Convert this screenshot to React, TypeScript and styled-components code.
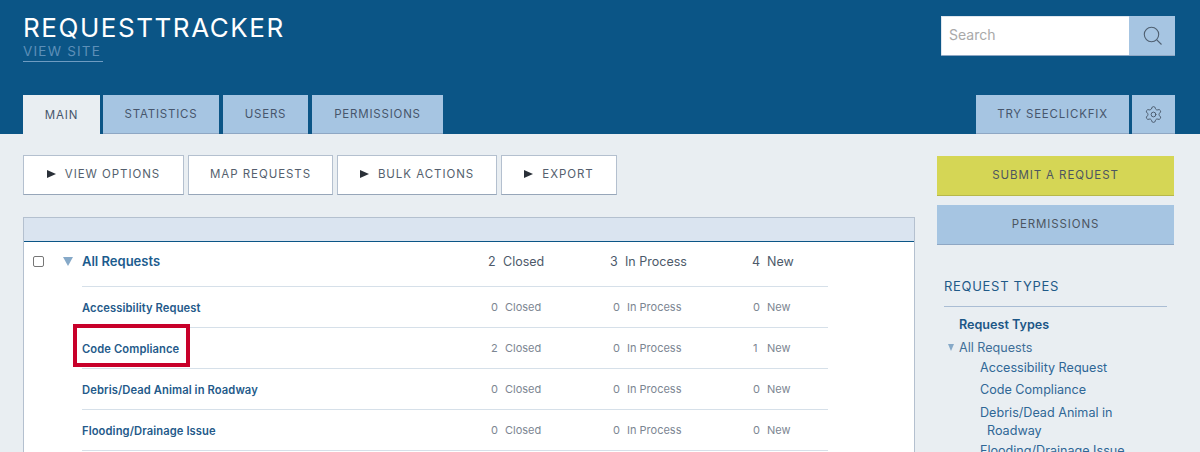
import React from "react";
import styled, { createGlobalStyle } from "styled-components";
import { Settings } from "lucide-react";

const Global = createGlobalStyle`
  html, body { margin: 0; padding: 0; background: #e9eef2; height: 452px; overflow: hidden; }
  body { font-family: "Inter", "Lato", sans-serif; color: #1f5a88; }
  * { box-sizing: border-box; }
`;

const Header = styled.header`
  height: 134px; background: #0b5586; padding: 16px 25px 0 23px;
  display: flex; flex-direction: column; justify-content: space-between;
`;
const TopRow = styled.div`display: flex; justify-content: space-between; align-items: flex-start;`;
const Brand = styled.div`display: flex; flex-direction: column; align-items: flex-start;`;
const Title = styled.h1`
  margin: 0; font-weight: 400; font-size: 26px; line-height: 24px; letter-spacing: 1.55px; color: #fff;
`;
const ViewSite = styled.a`
  font-size: 13.5px; line-height: 17px; letter-spacing: 1.2px; color: #5d8fb8;
  border-bottom: 1px solid #6f9cc2; padding-bottom: 1px; margin-top: 3px; padding-right: 2px;
`;
const Search = styled.div`display: flex; width: 234px; height: 39px; box-shadow: 0 1px 0 #8ea7c4;`;
const SearchInput = styled.div`
  flex: 1; background: #fff; color: #a9a9a9; font-size: 14px; padding: 0 7px; line-height: 36px;
  border-top: 1px solid #dfe6ee; border-left: 1px solid #dfe6ee;
`;
const SearchButton = styled.div`
  width: 46px; padding-left: 2px; background: #a6c5e2; display: flex; align-items: center; justify-content: center;
`;
const TabRow = styled.nav`display: flex; justify-content: space-between; align-items: flex-end;`;
const TabGroup = styled.div`display: flex;`;
const Tab = styled.div<{ $w: number; $gap?: number; $active?: boolean }>`
  width: ${p => p.$w}px; margin-right: ${p => p.$gap ?? 0}px; height: 39px;
  background: ${p => (p.$active ? "#e9eef2" : "#a6c5e2")};
  border-bottom: ${p => (p.$active ? "0" : "1px solid #8ea7c4")};
  display: flex; align-items: center; justify-content: center;
  font-size: 11.5px; letter-spacing: 0.8px; color: #47566c;
`;
const Body = styled.main`display: flex; justify-content: space-between; padding: 21px 26px 0 23px;`;
const Main = styled.section`width: 892px;`;
const Toolbar = styled.div`display: flex; gap: 4px; margin-bottom: 22px;`;
const ToolButton = styled.button<{ $w: number }>`
  width: ${p => p.$w}px; height: 40px; background: #fff; padding: 0 0 2px;
  border: 1px solid #b4c0cf; border-bottom-color: #97a6b9;
  display: flex; align-items: center; justify-content: center; gap: 9px;
  font-family: inherit; font-size: 11.5px; letter-spacing: 0.95px; color: #555f6e;
`;
const Play = styled.span`
  width: 0; height: 0; border-left: 9px solid #2a3038;
  border-top: 4px solid transparent; border-bottom: 4px solid transparent;
`;
const Table = styled.div`
  border: 1px solid #b4c0cf; border-bottom: 0; background: #fff; height: 400px;
`;
const TableHead = styled.div`height: 23px; background: #dae4f0; border-bottom: 1px solid #0b5586; box-sizing: content-box;`;
const TopLine = styled.div`
  display: flex; align-items: center; height: 44px; padding-bottom: 5px;
`;
const Check = styled.span`
  width: 11px; height: 11px; margin-left: 9px; border: 1px solid #767676; border-radius: 2px; background: #fff;
`;
const Twisty = styled.span`
  width: 0; height: 0; margin-left: 19px; margin-right: 9px;
  border-top: 9px solid #86a9c8; border-left: 5px solid transparent; border-right: 5px solid transparent;
`;
const Grid = styled.div`
  display: grid; grid-template-columns: 406px 122px 142px 76px; align-items: center;
`;
const TopGrid = styled(Grid)`width: 746px;`;
const RowList = styled.div`margin-left: 58px; width: 746px; border-top: 1px solid #d6e0e9;`;
const Row = styled(Grid)`height: 41px; border-bottom: 1px solid #d6e0e9;`;
const TopName = styled.span`font-size: 13px; font-weight: 600; color: #1c5c8e; padding-bottom: 2px;`;
const Name = styled.span`
  position: relative; justify-self: start; padding-top: 2px;
  font-size: 11.2px; letter-spacing: 0.1px; font-weight: 600; color: #245a8a;
`;
const Highlight = styled.span`
  position: absolute; left: -9px; top: -16px; width: 117px; height: 43px; border: 4px solid #c8002a;
`;
const Stat = styled.span`
  display: flex; font-size: 12.5px; color: #4d5a6a;
`;
const SubStat = styled.span<{ $inset: number }>`
  display: flex; padding-left: ${p => p.$inset}px; font-size: 11px; color: #7c8692;
`;
const TopNum = styled.span`width: 15px;`;
const SubNum = styled.span`width: 14px;`;
const Side = styled.aside`width: 237px; margin-top: 1px;`;
const SideButton = styled.div<{ $yellow?: boolean }>`
  height: 40px; margin-bottom: 9px; padding-bottom: 1px; display: flex; align-items: center; justify-content: center;
  background: ${p => (p.$yellow ? "#d5d655" : "#a6c5e2")};
  border-bottom: 1px solid ${p => (p.$yellow ? "#b7b84a" : "#8ea7c4")};
  font-size: 11.5px; letter-spacing: 0.9px; color: #4c5560;
`;
const SideTitle = styled.h2`
  margin: 32px 7px 0; padding-bottom: 11px; border-bottom: 1px solid #aabdd4;
  font-weight: 400; font-size: 13px; line-height: 18px; letter-spacing: 0.7px; color: #1f5a88;
`;
const Tree = styled.ul`list-style: none; margin: 0; padding: 0 0 0 22px; font-size: 12.6px; color: #2f6796;`;
const TreeHead = styled.li`font-weight: 600; color: #1c5686; margin-top: 9px; line-height: 18px;`;
const TreeRoot = styled.li`position: relative; margin-top: 5px; line-height: 18px; color: #3f6f98;`;
const RootArrow = styled.span`
  position: absolute; left: -11px; top: 5px; width: 0; height: 0;
  border-top: 7px solid #86a9c8; border-left: 3.5px solid transparent; border-right: 3.5px solid transparent;
`;
const Leaf = styled.li<{ $top: number }>`margin-left: 21px; margin-top: ${p => p.$top}px; line-height: 18px;`;
const LeafWrap = styled.span`display: block; padding-left: 7px; text-indent: -7px; width: 160px;`;

const rows = [
  ["Accessibility Request", 0, 0, 0],
  ["Code Compliance", 2, 0, 1],
  ["Debris/Dead Animal in Roadway", 0, 0, 0],
  ["Flooding/Drainage Issue", 0, 0, 0],
] as const;

const SearchIcon = () => (
  <svg width="20" height="20" viewBox="0 0 20 20" fill="none" stroke="#4f5f70" strokeWidth="1.1">
    <circle cx="8.5" cy="8.5" r="7.2" />
    <path d="M13.8 13.8 L18.5 18.5" />
  </svg>
);

export default function App() {
  return (
    <>
      <Global />
      <Header>
        <TopRow>
          <Brand>
            <Title>REQUESTTRACKER</Title>
            <ViewSite>VIEW SITE</ViewSite>
          </Brand>
          <Search>
            <SearchInput>Search</SearchInput>
            <SearchButton><SearchIcon /></SearchButton>
          </Search>
        </TopRow>
        <TabRow>
          <TabGroup>
            <Tab $w={77} $gap={3} $active>MAIN</Tab>
            <Tab $w={116} $gap={4}>STATISTICS</Tab>
            <Tab $w={85} $gap={4}>USERS</Tab>
            <Tab $w={131}>PERMISSIONS</Tab>
          </TabGroup>
          <TabGroup>
            <Tab $w={153} $gap={3}>TRY SEECLICKFIX</Tab>
            <Tab $w={43}><Settings size={19} strokeWidth={1.2} color="#4a5a6c" /></Tab>
          </TabGroup>
        </TabRow>
      </Header>
      <Body>
        <Main>
          <Toolbar>
            <ToolButton $w={161}><Play />VIEW OPTIONS</ToolButton>
            <ToolButton $w={145}>MAP REQUESTS</ToolButton>
            <ToolButton $w={160}><Play />BULK ACTIONS</ToolButton>
            <ToolButton $w={116}><Play />EXPORT</ToolButton>
          </Toolbar>
          <Table>
            <TableHead />
            <TopLine>
              <Check />
              <Twisty />
              <TopGrid>
                <TopName>All Requests</TopName>
                <Stat><TopNum>2</TopNum><span>Closed</span></Stat>
                <Stat><TopNum>3</TopNum><span>In Process</span></Stat>
                <Stat><TopNum>4</TopNum><span>New</span></Stat>
              </TopGrid>
            </TopLine>
            <RowList>
              {rows.map(([name, closed, inProcess, fresh]) => (
                <Row key={name}>
                  <Name>
                    {name}
                    {name === "Code Compliance" && <Highlight />}
                  </Name>
                  <SubStat $inset={3}><SubNum>{closed}</SubNum><span>Closed</span></SubStat>
                  <SubStat $inset={3}><SubNum>{inProcess}</SubNum><span>In Process</span></SubStat>
                  <SubStat $inset={1}><SubNum>{fresh}</SubNum><span>New</span></SubStat>
                </Row>
              ))}
            </RowList>
          </Table>
        </Main>
        <Side>
          <SideButton $yellow>SUBMIT A REQUEST</SideButton>
          <SideButton>PERMISSIONS</SideButton>
          <SideTitle>REQUEST TYPES</SideTitle>
          <Tree>
            <TreeHead>Request Types</TreeHead>
            <TreeRoot><RootArrow />All Requests</TreeRoot>
            <Leaf $top={2}>Accessibility Request</Leaf>
            <Leaf $top={4}>Code Compliance</Leaf>
            <Leaf $top={5}><LeafWrap>Debris/Dead Animal in Roadway</LeafWrap></Leaf>
            <Leaf $top={2}>Flooding/Drainage Issue</Leaf>
          </Tree>
        </Side>
      </Body>
    </>
  );
}
